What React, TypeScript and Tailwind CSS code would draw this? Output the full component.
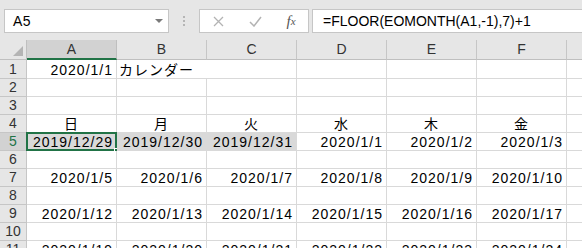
import React from "react";

const cols = ["A", "B", "C", "D", "E", "F"];

const rows: { n: number; cells: string[]; kind?: string }[] = [
  { n: 1, cells: ["2020/1/1", "カレンダー", "", "", "", ""] },
  { n: 2, cells: ["", "", "", "", "", ""] },
  { n: 3, cells: ["", "", "", "", "", ""] },
  { n: 4, cells: ["日", "月", "火", "水", "木", "金"], kind: "week" },
  { n: 5, cells: ["2019/12/29", "2019/12/30", "2019/12/31", "2020/1/1", "2020/1/2", "2020/1/3"] },
  { n: 6, cells: ["", "", "", "", "", ""] },
  { n: 7, cells: ["2020/1/5", "2020/1/6", "2020/1/7", "2020/1/8", "2020/1/9", "2020/1/10"] },
  { n: 8, cells: ["", "", "", "", "", ""] },
  { n: 9, cells: ["2020/1/12", "2020/1/13", "2020/1/14", "2020/1/15", "2020/1/16", "2020/1/17"] },
  { n: 10, cells: ["", "", "", "", "", ""] },
  { n: 11, cells: ["2020/1/19", "2020/1/20", "2020/1/21", "2020/1/22", "2020/1/23", "2020/1/24"] },
];

const font = "font-['Liberation_Sans','Noto_Sans_CJK_JP',sans-serif]";

export default function App() {
  return (
    <div className={`w-[582px] h-[248px] overflow-hidden bg-white text-[#000] ${font}`}>
      {/* formula bar */}
      <div className="h-[40px] bg-[#e6e6e6] flex items-start pt-[9px] pl-[4px]">
        <div className="w-[165px] h-[24px] bg-white border border-[#c6c6c6] flex items-center justify-between pl-[8px] pr-[5px] text-[14px] tracking-[0.5px]">
          <span>A5</span>
          <svg width="8" height="5" viewBox="0 0 8 5">
            <path d="M0 0h8L4 4z" fill="#7a7a7a" />
          </svg>
        </div>
        <div className="w-[30px] h-[24px] flex flex-col items-center justify-center gap-[2px]">
          <span className="w-[2px] h-[2px] bg-[#b5b5b5]" />
          <span className="w-[2px] h-[2px] bg-[#b5b5b5]" />
          <span className="w-[2px] h-[2px] bg-[#b5b5b5]" />
        </div>
        <div className="w-[110px] h-[24px] bg-white border border-[#c6c6c6] flex items-center">
          <div className="w-[37px] flex justify-center">
            <svg width="11" height="11" viewBox="0 0 11 11">
              <path d="M1 1l9 9M10 1l-9 9" stroke="#b3b3b3" strokeWidth="1.3" />
            </svg>
          </div>
          <div className="w-[37px] flex justify-center">
            <svg width="13" height="11" viewBox="0 0 13 11">
              <path d="M1 6l4 4L12 1" stroke="#b3b3b3" strokeWidth="1.5" fill="none" />
            </svg>
          </div>
          <div className="w-[34px] flex justify-center font-['Liberation_Serif',serif] italic text-[15px] text-[#555]">
            f<span className="text-[11px] mt-[3px]">x</span>
          </div>
        </div>
        <div className="ml-[3px] flex-1 h-[24px] bg-white border border-[#c6c6c6] border-r-0 flex items-center pl-[10px] text-[14px]">
          =FLOOR(EOMONTH(A1,-1),7)+1
        </div>
      </div>

      {/* sheet */}
      <div className="grid grid-cols-[27px_repeat(6,90px)_40px] grid-rows-[20px_19px_repeat(10,18px)]">
        {/* corner */}
        <div className="bg-[#e6e6e6] border-r border-b border-[#bfbfbf] relative">
          <svg className="absolute right-[3px] bottom-[3px]" width="10" height="10" viewBox="0 0 10 10">
            <path d="M10 0v10H0z" fill="#b4b4b4" />
          </svg>
        </div>
        {cols.map((c) => (
          <div
            key={c}
            className={`flex items-center justify-center text-[14px] text-[#333] border-r ${
              c === "A"
                ? "bg-[#d2d2d2] border-b-2 border-b-[#217346] border-r-[#bfbfbf]"
                : "bg-[#e6e6e6] border-b border-b-[#bfbfbf] border-r-[#c6c6c6]"
            }`}
          >
            {c}
          </div>
        ))}
        <div className="bg-[#e6e6e6] border-b border-[#bfbfbf]" />

        {rows.map((r) => (
          <React.Fragment key={r.n}>
            <div
              className={`flex items-center justify-center text-[14px] border-r border-b border-[#c6c6c6] ${
                r.n === 5 ? "bg-[#d2d2d2] text-[#217346]" : "bg-[#e6e6e6] text-[#333]"
              }`}
            >
              {r.n}
            </div>
            {r.cells.map((v, i) => {
              const active = r.n === 5 && i === 0;
              const shaded = r.n === 5 && i < 3;
              const isText = r.n === 1 && i === 1;
              const align =
                r.kind === "week" ? "justify-center" : isText ? "justify-start pl-[2px]" : "justify-end pr-[3px]";
              return (
                <div
                  key={i}
                  className={`relative flex items-end whitespace-nowrap text-[14px] leading-[14px] tracking-[1px] border-r border-b border-[#d9d9d9] ${align} ${
                    shaded ? "bg-[#d9d9d9]" : "bg-white"
                  } ${isText ? "overflow-visible z-10 border-r-0" : ""}`}
                >
                  <span className="pb-[1px]">{v}</span>
                  {active && (
                    <>
                      <div className="absolute -left-[1px] -top-[1px] right-[-1px] bottom-[-1px] border-2 border-[#217346]" />
                      <div className="absolute right-[-4px] bottom-[-4px] w-[6px] h-[6px] bg-[#217346] border border-white" />
                    </>
                  )}
                </div>
              );
            })}
            <div className="bg-white border-b border-[#d9d9d9]" />
          </React.Fragment>
        ))}
      </div>
    </div>
  );
}
